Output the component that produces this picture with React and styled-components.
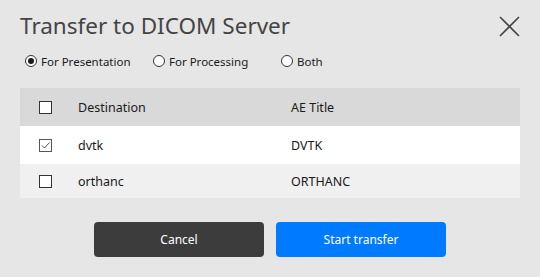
import React, { useState } from 'react';
import styled, { createGlobalStyle } from 'styled-components';

const GlobalStyle = createGlobalStyle`
  html, body {
    margin: 0;
    padding: 0;
    background: #e6e6e6;
    font-family: "Noto Sans", "Open Sans", sans-serif;
  }
`;

const Dialog = styled.div`
  width: 540px;
  height: 277px;
  box-sizing: border-box;
  padding: 10px 20px 0 20px;
  display: flex;
  flex-direction: column;
`;

const TitleBar = styled.div`
  display: flex;
  justify-content: space-between;
  align-items: flex-start;
  height: 34px;
`;

const Title = styled.h1`
  margin: 0;
  font-size: 22.5px;
  font-weight: 400;
  line-height: 32px;
  color: #444444;
`;

const CloseButton = styled.button`
  border: none;
  background: none;
  padding: 0;
  margin: 6px 0 0 0;
  width: 21px;
  height: 21px;
  cursor: pointer;
`;

const RadioRow = styled.div`
  display: flex;
  margin: 6px 0 0 5px;
  height: 22px;
  align-items: center;
`;

const RadioItem = styled.label`
  display: flex;
  align-items: center;
  width: 128px;
  font-size: 11.5px;
  color: #1a1a1a;
  cursor: pointer;
`;

const RadioDot = styled.span`
  width: 10px;
  height: 10px;
  border: 1px solid #333333;
  border-radius: 50%;
  background: #ffffff;
  margin-right: 4px;
  display: flex;
  align-items: center;
  justify-content: center;

  &::after {
    content: '';
    width: 6px;
    height: 6px;
    border-radius: 50%;
    background: ${p => (p.$on ? '#1a1a1a' : 'transparent')};
  }
`;

const Table = styled.div`
  margin-top: 16px;
  display: flex;
  flex-direction: column;
`;

const Row = styled.div`
  display: grid;
  grid-template-columns: 58px 213px 1fr;
  align-items: center;
  height: ${p => p.$h}px;
  background: ${p => p.$bg};
  font-size: 12.5px;
  color: #1a1a1a;
`;

const CheckCell = styled.div`
  display: flex;
  justify-content: flex-start;
  padding-left: 19px;
`;

const Box = styled.span`
  width: 11px;
  height: 11px;
  border: 1px solid ${p => (p.$on ? '#555555' : '#333333')};
  background: #ffffff;
  display: flex;
  align-items: center;
  justify-content: center;
`;

const Cell = styled.div`
  white-space: nowrap;
`;

const Footer = styled.div`
  display: flex;
  justify-content: center;
  gap: 12px;
  margin-top: 24px;
`;

const Button = styled.button`
  width: 170px;
  height: 35px;
  border: none;
  border-radius: 4px;
  background: ${p => (p.$primary ? '#007bff' : '#3c3c3c')};
  color: #ffffff;
  font-family: inherit;
  font-size: 12px;
  cursor: pointer;
`;

const destinations = [
  { name: 'dvtk', ae: 'DVTK', checked: true, h: 38 },
  { name: 'orthanc', ae: 'ORTHANC', checked: false, h: 34 }
];

const modes = ['For Presentation', 'For Processing', 'Both'];

const App = () => {
  const [mode, setMode] = useState('For Presentation');

  return (
    <Dialog>
      <GlobalStyle />
      <TitleBar>
        <Title>Transfer to DICOM Server</Title>
        <CloseButton aria-label="Close">
          <svg width="21" height="21" viewBox="0 0 21 21">
            <path d="M1 1 L20 20 M20 1 L1 20" stroke="#444" strokeWidth="1.6" fill="none" />
          </svg>
        </CloseButton>
      </TitleBar>

      <RadioRow>
        {modes.map(m => (
          <RadioItem key={m} onClick={() => setMode(m)}>
            <RadioDot $on={mode === m} />
            {m}
          </RadioItem>
        ))}
      </RadioRow>

      <Table>
        <Row $h={38} $bg="#d9d9d9">
          <CheckCell>
            <Box />
          </CheckCell>
          <Cell>Destination</Cell>
          <Cell>AE Title</Cell>
        </Row>
        {destinations.map((d, i) => (
          <Row key={d.name} $h={d.h} $bg={i % 2 === 0 ? '#ffffff' : '#f0f0f0'}>
            <CheckCell>
              <Box $on={d.checked}>
                {d.checked && (
                  <svg width="9" height="9" viewBox="0 0 9 9">
                    <path d="M1 4.5 L3.5 7 L8.5 1.5" stroke="#555" strokeWidth="1" fill="none" />
                  </svg>
                )}
              </Box>
            </CheckCell>
            <Cell>{d.name}</Cell>
            <Cell>{d.ae}</Cell>
          </Row>
        ))}
      </Table>

      <Footer>
        <Button>Cancel</Button>
        <Button $primary>Start transfer</Button>
      </Footer>
    </Dialog>
  );
};

export default App;
